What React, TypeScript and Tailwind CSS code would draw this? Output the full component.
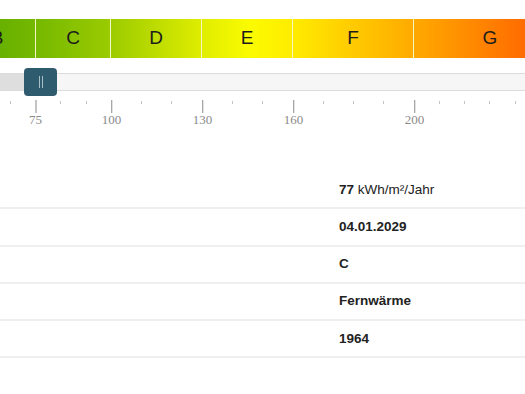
import React from 'react'

// energy scale: pixel position of a kWh value on the visible strip
const toX = (v: number) => 35 + (v - 75) * 3.03

const classes = [
  { label: 'B', width: 'w-[76px]' },
  { label: 'C', width: 'w-[75px]' },
  { label: 'D', width: 'w-[91px]' },
  { label: 'E', width: 'w-[91px]' },
  { label: 'F', width: 'w-[121px]' },
  { label: 'G', width: 'w-[153px]' },
]

const majorTicks = [75, 100, 130, 160, 200]
const minorTicks = [
  66.67, 83.33, 91.67, 110, 120, 140, 150, 170, 180, 190, 208.33, 216.67, 225, 233.33, 241.67,
]

const rows: { value: React.ReactNode }[] = [
  {
    value: (
      <>
        <span className="font-bold">77</span> kWh/m²/Jahr
      </>
    ),
  },
  { value: <span className="font-bold">04.01.2029</span> },
  { value: <span className="font-bold">C</span> },
  { value: <span className="font-bold">Fernwärme</span> },
  { value: <span className="font-bold">1964</span> },
]

const current = 77

export default function App() {
  return (
    <div className="w-[525px] h-[394px] overflow-hidden bg-white pt-[19px] font-['Liberation_Sans',Arial,sans-serif]">
      {/* Colour bar */}
      <div className="w-full overflow-hidden">
        <div className="flex h-[39px] w-[607px] -ml-[41px] bg-[linear-gradient(to_right,#5aa800_0%,#74b800_12.5%,#9bcb00_24.9%,#dfed00_39.9%,#fbfb00_47.9%,#ffec00_54.9%,#ffaa00_74.8%,#ff6c00_93.2%,#ff5a00_100%)]">
          {classes.map((c, i) => (
            <div
              key={c.label}
              className={`${c.width} h-full flex items-center justify-center text-[19px] text-[#1c1c1c] ${
                i > 0 ? 'border-l border-[#f4f8c0]' : ''
              }`}
            >
              {c.label}
            </div>
          ))}
        </div>
      </div>

      {/* Slider */}
      <div className="relative mt-[10px] h-[28px] flex items-center">
        <div className="flex h-[18px] w-full border-y border-[#dcdcdc] bg-[#f6f6f6]">
          <div className="h-full bg-[#dedede]" style={{ width: toX(current) }} />
        </div>
        <div
          className="absolute top-0 h-[28px] w-[33px] rounded-[4px] bg-[#2f5b6e] flex items-center justify-center gap-[2px]"
          style={{ left: toX(current) - 17 }}
        >
          <div className="w-px h-[12px] bg-[#a9c0ca]" />
          <div className="w-px h-[12px] bg-[#a9c0ca]" />
        </div>
      </div>

      {/* Scale */}
      <div className="relative h-[30px] font-['Liberation_Serif',serif]">
        {minorTicks.map((v) => (
          <div
            key={v}
            className="absolute top-[5px] w-px h-[3px] bg-[#c4c4c4]"
            style={{ left: Math.round(toX(v)) }}
          />
        ))}
        {majorTicks.map((v) => (
          <div
            key={v}
            className="absolute top-[4px] flex flex-col items-center -translate-x-1/2"
            style={{ left: Math.round(toX(v)) + 0.5 }}
          >
            <div className="w-px h-[13px] bg-[#8a8a8a]" />
            <span className="text-[13px] leading-[13px] text-[#8a8a8a]">{v}</span>
          </div>
        ))}
      </div>

      {/* Details table */}
      <div className="mt-[46px]">
        {rows.map((r, i) => (
          <div
            key={i}
            className="grid grid-cols-[339px_1fr] h-[37.3px] items-center border-b-2 border-[#efefef] text-[13.5px] text-[#222]"
          >
            <div />
            <div>{r.value}</div>
          </div>
        ))}
      </div>
    </div>
  )
}
